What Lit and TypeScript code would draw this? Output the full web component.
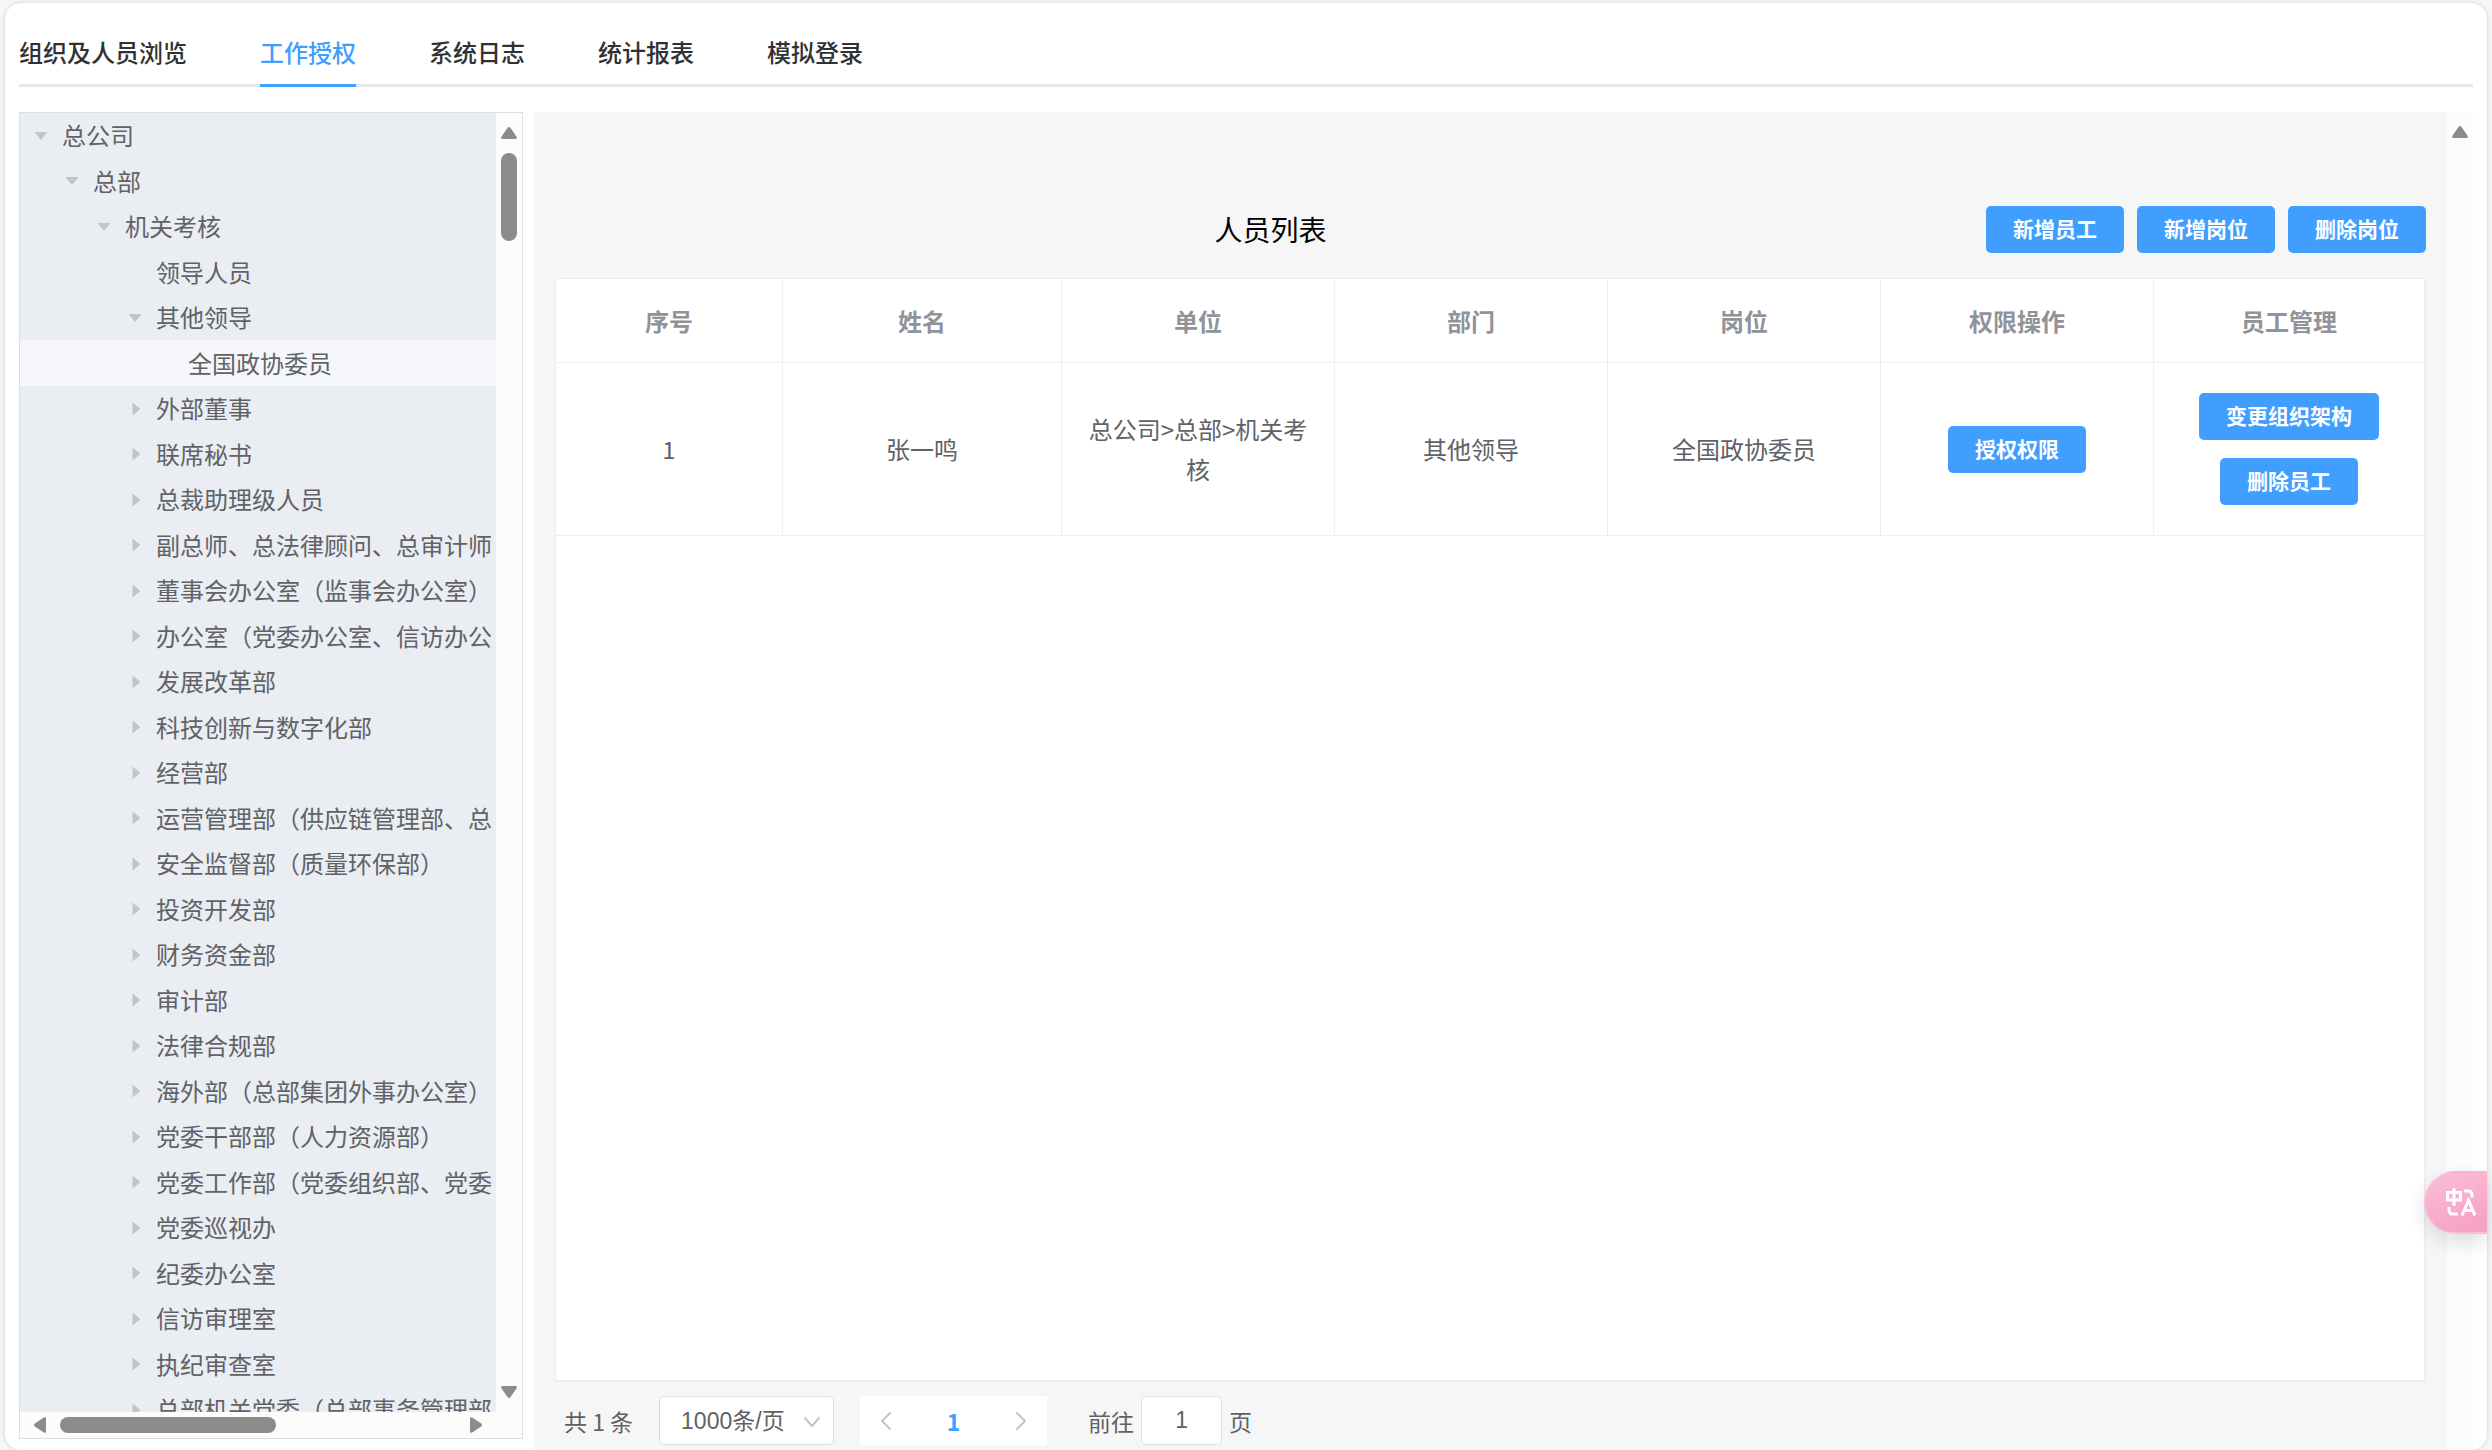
import { LitElement, html, css, svg } from "lit";
import { customElement, state } from "lit/decorators.js";
import { classMap } from "lit/directives/class-map.js";

type TreeRow = { label: string; depth: number; caret: "open" | "closed" | "none" };

const closed = (label: string): TreeRow => ({ label, depth: 3, caret: "closed" });

const TREE: TreeRow[] = [
  { label: "总公司", depth: 0, caret: "open" },
  { label: "总部", depth: 1, caret: "open" },
  { label: "机关考核", depth: 2, caret: "open" },
  { label: "领导人员", depth: 3, caret: "none" },
  { label: "其他领导", depth: 3, caret: "open" },
  { label: "全国政协委员", depth: 4, caret: "none" },
  ...[
    "外部董事",
    "联席秘书",
    "总裁助理级人员",
    "副总师、总法律顾问、总审计师",
    "董事会办公室（监事会办公室）",
    "办公室（党委办公室、信访办公",
    "发展改革部",
    "科技创新与数字化部",
    "经营部",
    "运营管理部（供应链管理部、总",
    "安全监督部（质量环保部）",
    "投资开发部",
    "财务资金部",
    "审计部",
    "法律合规部",
    "海外部（总部集团外事办公室）",
    "党委干部部（人力资源部）",
    "党委工作部（党委组织部、党委",
    "党委巡视办",
    "纪委办公室",
    "信访审理室",
    "执纪审查室",
    "总部机关党委（总部事务管理部",
  ].map(closed),
];

const TABS = ["组织及人员浏览", "工作授权", "系统日志", "统计报表", "模拟登录"];
const HEADERS = ["序号", "姓名", "单位", "部门", "岗位", "权限操作", "员工管理"];

const arrow = (dir: "up" | "down" | "left" | "right") => {
  const turn = { up: 0, right: 90, down: 180, left: 270 }[dir];
  return html`<svg class="arrow" viewBox="0 0 16 16" aria-hidden="true">
    ${svg`<path transform="rotate(${turn} 8 8)" d="M6.6 2.8Q8 1.2 9.4 2.8L15.6 11.8Q16.4 14 14.4 14H1.6Q-.4 14 .4 11.8Z" fill="#8b8b8b"/>`}
  </svg>`;
};

@customElement("org-tree")
export class OrgTree extends LitElement {
  @state() private selected = 5;

  static styles = css`
    :host {
      display: grid;
      grid-template-columns: minmax(0, 1fr) 26px;
      grid-template-rows: minmax(0, 1fr) 26px;
      box-sizing: border-box;
      border: 1px solid #dcdfe0;
      background: #fcfcfc;
    }
    .rows {
      overflow: hidden;
      background: #eaedf2;
    }
    .row {
      display: flex;
      align-items: center;
      width: 100%;
      height: 45px;
      padding: 0;
      border: 0;
      background: none;
      color: #606266;
      font: inherit;
      line-height: 43px;
      text-align: left;
      white-space: nowrap;
      cursor: pointer;
    }
    .row:nth-child(even) {
      height: 46px;
    }
    .row.selected {
      background: #f5f7fa;
    }
    .label {
      padding-bottom: 2px;
    }
    .caret {
      flex: none;
      width: 22px;
      height: 22px;
      padding: 0 10px;
      fill: #c0c4cc;
    }
    .vbar,
    .hbar {
      display: flex;
      align-items: center;
    }
    .vbar {
      flex-direction: column;
      padding: 12px 0;
    }
    .hbar {
      padding: 0 12px;
    }
    .arrow {
      flex: none;
      width: 16px;
      height: 16px;
    }
    .vtrack,
    .htrack {
      flex: 1;
    }
    .vtrack {
      padding-top: 12px;
    }
    .htrack {
      padding-left: 12px;
    }
    .vthumb {
      width: 16px;
      height: 88px;
      border-radius: 8px;
      background: #8b8b8b;
    }
    .hthumb {
      width: 216px;
      height: 16px;
      border-radius: 8px;
      background: #8b8b8b;
    }
  `;

  render() {
    return html`
      <div class="rows" role="tree" aria-label="组织">
        ${TREE.map(
          (row, i) => html`<button
            type="button"
            role="treeitem"
            class=${classMap({ row: true, selected: i === this.selected })}
            aria-level=${row.depth + 1}
            aria-selected=${i === this.selected}
            style="padding-left:${Math.floor((row.depth * 63) / 2)}px"
            @click=${() => (this.selected = i)}
          >
            <svg class="caret" viewBox="0 0 22 22" aria-hidden="true">
              ${row.caret === "open"
                ? svg`<path d="M4.500 7h13l-6.500 8z"/>`
                : row.caret === "closed"
                  ? svg`<path d="M8.500 4.500v13l8-6.500z"/>`
                  : null}
            </svg>
            <span class="label">${row.label}</span>
          </button>`
        )}
      </div>
      <div class="vbar">
        ${arrow("up")}
        <div class="vtrack"><div class="vthumb"></div></div>
        ${arrow("down")}
      </div>
      <div class="hbar">
        ${arrow("left")}
        <div class="htrack"><div class="hthumb"></div></div>
        ${arrow("right")}
      </div>
    `;
  }
}

@customElement("staff-panel")
export class StaffPanel extends LitElement {
  static styles = css`
    :host {
      display: flex;
      min-width: 0;
      background: #f6f6f6;
    }
    .content {
      flex: 1;
      min-width: 0;
      display: flex;
      flex-direction: column;
      padding: 94px 21px 5px;
    }
    .bar {
      width: 26px;
      padding-top: 12px;
      box-sizing: border-box;
      background: #fcfcfc;
    }
    .arrow {
      display: block;
      width: 16px;
      height: 16px;
      margin: 0 auto;
    }
    .head {
      display: flex;
      align-items: center;
      gap: 13px;
      margin-bottom: 25px;
    }
    h1 {
      flex: 1;
      margin: 0;
      padding-left: 13px;
      color: #000;
      font-size: 28px;
      font-weight: 400;
      line-height: 47px;
      text-align: center;
    }
    .btn {
      height: 47px;
      padding: 0 27px 2px;
      border: 0;
      border-radius: 5px;
      background: #409eff;
      color: #fff;
      font: inherit;
      font-size: 21px;
      font-weight: 700;
      line-height: 45px;
      cursor: pointer;
    }
    .sheet {
      flex: 1;
      border: 1px solid #ebeef5;
      border-right-width: 2px;
      border-bottom-width: 2px;
      background: #fff;
    }
    table {
      width: 100%;
      table-layout: fixed;
      border-collapse: separate;
      border-spacing: 0;
    }
    .c-index {
      width: 227px;
    }
    .c-name {
      width: 279px;
    }
    .c-manage {
      width: 270px;
    }
    th,
    td {
      box-sizing: border-box;
      padding: 0 18px;
      border-right: 1px solid #ebeef5;
      border-bottom: 1px solid #ebeef5;
      line-height: 40px;
      text-align: center;
    }
    th:last-child,
    td:last-child {
      border-right: 0;
    }
    th {
      height: 84px;
      color: #909399;
      font-weight: 700;
    }
    td {
      height: 173px;
      color: #606266;
    }
    .stack {
      display: flex;
      flex-direction: column;
      align-items: center;
      gap: 18px;
    }
    .pager {
      display: flex;
      align-items: center;
      height: 49px;
      padding: 14px 9px 0;
      color: #606266;
      font-size: 23px;
    }
    .select {
      display: grid;
      align-items: center;
      width: 175px;
      height: 49px;
      margin: 0 26px;
    }
    select,
    .select svg {
      grid-area: 1 / 1;
    }
    select,
    input {
      box-sizing: border-box;
      height: 49px;
      border: 1px solid #dcdfe6;
      border-radius: 5px;
      background: #fff;
      color: #606266;
      font-family: "Liberation Sans", "Noto Sans CJK SC", sans-serif;
      font-size: 23px;
    }
    select {
      appearance: none;
      width: 100%;
      padding: 0 21px;
    }
    input {
      width: 81px;
      padding: 0;
      text-align: center;
    }
    .select svg {
      justify-self: end;
      width: 18px;
      height: 18px;
      margin-right: 13px;
      pointer-events: none;
    }
    svg.line {
      fill: none;
      stroke: #c0c4cc;
      stroke-width: 2;
      stroke-linecap: round;
      stroke-linejoin: round;
    }
    .pages {
      display: flex;
      background: #fff;
    }
    .pages button {
      display: flex;
      align-items: center;
      justify-content: center;
      width: 52px;
      height: 49px;
      padding: 0;
      border: 0;
      background: none;
      color: #409eff;
      font: inherit;
      font-weight: 700;
    }
    .pages .num {
      width: 83px;
    }
    .pages svg {
      width: 20px;
      height: 20px;
    }
    .goto {
      display: flex;
      align-items: center;
      gap: 7px;
      margin-left: 41px;
    }
  `;

  render() {
    return html`
      <div class="content">
        <div class="head">
          <h1>人员列表</h1>
          <button type="button" class="btn">新增员工</button>
          <button type="button" class="btn">新增岗位</button>
          <button type="button" class="btn">删除岗位</button>
        </div>
        <div class="sheet">
          <table>
            <colgroup>
              <col class="c-index" />
              <col class="c-name" />
              <col span="4" />
              <col class="c-manage" />
            </colgroup>
            <thead>
              <tr>${HEADERS.map((h) => html`<th scope="col">${h}</th>`)}</tr>
            </thead>
            <tbody>
              <tr>
                <td>1</td>
                <td>张一鸣</td>
                <td>总公司&gt;总部&gt;机关考核</td>
                <td>其他领导</td>
                <td>全国政协委员</td>
                <td>
                  <div class="stack">
                    <button type="button" class="btn">授权权限</button>
                  </div>
                </td>
                <td>
                  <div class="stack">
                    <button type="button" class="btn">变更组织架构</button>
                    <button type="button" class="btn">删除员工</button>
                  </div>
                </td>
              </tr>
            </tbody>
          </table>
        </div>
        <div class="pager">
          <span>共 1 条</span>
          <div class="select">
            <select aria-label="每页条数">
              <option>1000条/页</option>
            </select>
            <svg class="line" viewBox="0 0 18 18" aria-hidden="true"><path d="M2 6l7 8 7-8" /></svg>
          </div>
          <div class="pages">
            <button type="button" aria-label="上一页">
              <svg class="line" viewBox="0 0 20 20" aria-hidden="true"><path d="M14 2L6 10l8 8" /></svg>
            </button>
            <button type="button" class="num" aria-current="page">1</button>
            <button type="button" aria-label="下一页">
              <svg class="line" viewBox="0 0 20 20" aria-hidden="true"><path d="M6 2l8 8-8 8" /></svg>
            </button>
          </div>
          <label class="goto">前往<input type="text" inputmode="numeric" .value=${"1"} />页</label>
        </div>
      </div>
      <div class="bar">${arrow("up")}</div>
    `;
  }
}

@customElement("app-root")
export class AppRoot extends LitElement {
  @state() private tab = 1;

  static styles = css`
    :host {
      display: block;
      box-sizing: border-box;
      height: 100vh;
      overflow: hidden;
      padding: 3px 5px 0;
      background: #f6f6f6;
      color: #303133;
      font-family: "Noto Sans CJK SC", sans-serif;
      font-size: 24px;
    }
    .card {
      display: flex;
      flex-direction: column;
      box-sizing: border-box;
      height: 100%;
      padding: 14px 14px 0;
      border-radius: 16px;
      background: #fff;
      box-shadow: 0 0 4px rgba(0, 0, 0, 0.16);
    }
    .tabs {
      display: flex;
      flex: none;
      gap: 73px;
      box-sizing: border-box;
      height: 70px;
      margin-bottom: 25px;
      box-shadow: inset 0 -3px #e4e7ed;
    }
    .tab {
      padding: 2px 0 0;
      border: 0;
      border-bottom: 3px solid transparent;
      background: none;
      color: #303133;
      font: inherit;
      font-weight: 500;
      line-height: 65px;
      cursor: pointer;
    }
    .tab.active {
      border-color: #409eff;
      color: #409eff;
    }
    .body {
      flex: 1;
      min-height: 0;
      display: grid;
      grid-template-columns: 504px minmax(0, 1fr);
      grid-template-rows: minmax(0, 1fr);
      gap: 11px;
    }
    org-tree {
      margin-bottom: 11px;
    }
    .translate {
      position: fixed;
      right: 5px;
      bottom: 216px;
      display: flex;
      align-items: center;
      box-sizing: border-box;
      width: 63px;
      height: 63px;
      padding: 0 0 0 20px;
      border: 2px solid rgba(255, 190, 215, 0.6);
      border-right: 0;
      border-radius: 32px 0 0 32px;
      background: linear-gradient(160deg, #fbbdd8, #f59fc2);
      box-shadow: 0 8px 20px rgba(0, 0, 0, 0.12);
    }
    .translate svg {
      width: 30px;
      height: 30px;
    }
  `;

  render() {
    return html`
      <div class="card">
        <nav class="tabs" role="tablist">
          ${TABS.map(
            (t, i) => html`<button
              type="button"
              role="tab"
              class=${classMap({ tab: true, active: i === this.tab })}
              aria-selected=${i === this.tab}
              @click=${() => (this.tab = i)}
            >${t}</button>`
          )}
        </nav>
        <div class="body">
          <org-tree></org-tree>
          <staff-panel></staff-panel>
        </div>
      </div>
      <button type="button" class="translate" aria-label="翻译">
        <svg viewBox="0 0 30 30" fill="none" stroke="#fff" stroke-width="3" aria-hidden="true">
          <path d="M1.500 4.500h13v7.500h-13zM8 0v18" />
          <path d="M18 3h4q4 0 4 4V9.500M3 19v3q0 4 4 4h5" />
          <path d="M16 27.500L22.500 12.500l6.500 15M18 22.500h9" />
        </svg>
      </button>
    `;
  }
}
